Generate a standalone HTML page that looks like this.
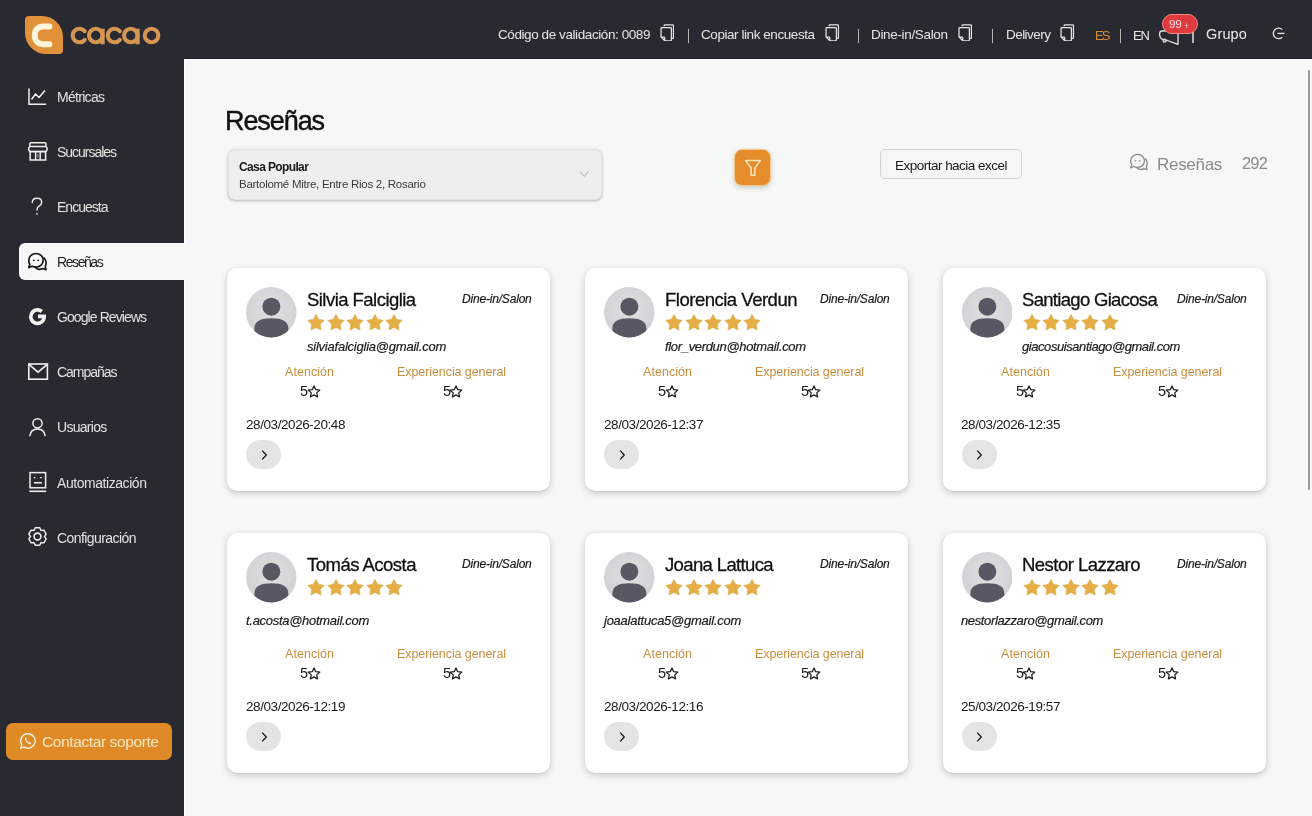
<!DOCTYPE html>
<html><head><meta charset="utf-8"><title>Reseñas</title>
<style>
html,body{margin:0;padding:0;width:1312px;height:816px;overflow:hidden;background:#f3f4f4}
body{position:relative;font-family:"Liberation Sans",sans-serif}
.t{position:absolute;white-space:nowrap;will-change:transform}
.b{position:absolute;display:block}
</style></head><body>
<div class="b" style="left:0px;top:0px;width:1312px;height:59px;background:#292931"></div>
<div class="b" style="left:0px;top:59px;width:184px;height:757px;background:#292931"></div>
<div class="b" style="left:184px;top:59px;width:1128px;height:757px;background:#f6f8f8"></div>
<div class="b" style="left:184px;top:59px;width:1128px;height:1px;background:#ffffff"></div>
<div class="b" style="left:184px;top:59px;width:1px;height:757px;background:#ffffff"></div>
<div class="b" style="left:184px;top:58px;width:1128px;height:1px;background:#202027"></div>
<div class="b" style="left:25px;top:16px;width:38px;height:38px;background:#e0913a;border-radius:4px 21px 4px 21px"></div>
<svg class="b" style="left:25px;top:16px;" width="38" height="38" viewBox="0 0 38 38"><path d="M24.4 10.5 H18.2 C12.6 10.5 9.7 14.4 9.7 19.35 C9.7 24.3 12.6 28.2 18.2 28.2 H24.4" fill="none" stroke="#fff6dc" stroke-width="5.9" stroke-linecap="round"/></svg>
<svg class="b" style="left:0px;top:0px;" width="170" height="59" viewBox="0 0 170 59"><path d="M84.71 31.13 A6.8 6.8 0 1 0 84.71 39.87" fill="none" stroke="#d59652" stroke-width="4.1" stroke-linecap="round"/><circle cx="95.8" cy="35.5" r="6.8" fill="none" stroke="#d59652" stroke-width="4.1"/><path d="M102.60 28.70 V44.35" stroke="#d59652" stroke-width="4.1"/><path d="M119.81 31.13 A6.8 6.8 0 1 0 119.81 39.87" fill="none" stroke="#d59652" stroke-width="4.1" stroke-linecap="round"/><circle cx="130.8" cy="35.5" r="6.8" fill="none" stroke="#d59652" stroke-width="4.1"/><path d="M137.60 28.70 V44.35" stroke="#d59652" stroke-width="4.1"/><circle cx="151.6" cy="35.5" r="6.8" fill="none" stroke="#d59652" stroke-width="4.1"/></svg>
<div class="t" style="left:498.00px;top:28.37px;font-size:13.5px;line-height:13.5px;color:#e6e6e6;font-weight:400;font-style:normal;letter-spacing:-0.418px;">Código de validación: 0089</div>
<svg class="b" style="left:659.7px;top:23.7px;" width="14.5" height="17.6" viewBox="0 0 14 17"><path d="M4 2.2 V1.6 Q4 0.8 4.8 0.8 H12.2 Q13 0.8 13 1.6 V13.2 Q13 14 12.2 14 H11.3" fill="none" stroke="#e6e6e6" stroke-width="1.2"/><path d="M1.8 3.4 H10.2 Q11 3.4 11 4.2 V15.4 Q11 16.2 10.2 16.2 H4.6 L1 12.6 V4.2 Q1 3.4 1.8 3.4 Z M1 12.6 H3.8 Q4.6 12.6 4.6 13.4 V16.2" fill="none" stroke="#e6e6e6" stroke-width="1.2"/></svg>
<div class="b" style="left:687.8px;top:29px;width:1.4px;height:13.5px;background:#b4b4b4"></div>
<div class="t" style="left:701.00px;top:28.37px;font-size:13.5px;line-height:13.5px;color:#e6e6e6;font-weight:400;font-style:normal;letter-spacing:-0.436px;">Copiar link encuesta</div>
<svg class="b" style="left:825.2px;top:23.7px;" width="14.5" height="17.6" viewBox="0 0 14 17"><path d="M4 2.2 V1.6 Q4 0.8 4.8 0.8 H12.2 Q13 0.8 13 1.6 V13.2 Q13 14 12.2 14 H11.3" fill="none" stroke="#e6e6e6" stroke-width="1.2"/><path d="M1.8 3.4 H10.2 Q11 3.4 11 4.2 V15.4 Q11 16.2 10.2 16.2 H4.6 L1 12.6 V4.2 Q1 3.4 1.8 3.4 Z M1 12.6 H3.8 Q4.6 12.6 4.6 13.4 V16.2" fill="none" stroke="#e6e6e6" stroke-width="1.2"/></svg>
<div class="b" style="left:857.8px;top:29px;width:1.4px;height:13.5px;background:#b4b4b4"></div>
<div class="t" style="left:870.60px;top:28.37px;font-size:13.5px;line-height:13.5px;color:#e6e6e6;font-weight:400;font-style:normal;letter-spacing:-0.335px;">Dine-in/Salon</div>
<svg class="b" style="left:957.9000000000001px;top:23.7px;" width="14.5" height="17.6" viewBox="0 0 14 17"><path d="M4 2.2 V1.6 Q4 0.8 4.8 0.8 H12.2 Q13 0.8 13 1.6 V13.2 Q13 14 12.2 14 H11.3" fill="none" stroke="#e6e6e6" stroke-width="1.2"/><path d="M1.8 3.4 H10.2 Q11 3.4 11 4.2 V15.4 Q11 16.2 10.2 16.2 H4.6 L1 12.6 V4.2 Q1 3.4 1.8 3.4 Z M1 12.6 H3.8 Q4.6 12.6 4.6 13.4 V16.2" fill="none" stroke="#e6e6e6" stroke-width="1.2"/></svg>
<div class="b" style="left:992.0px;top:29px;width:1.4px;height:13.5px;background:#b4b4b4"></div>
<div class="t" style="left:1005.60px;top:28.37px;font-size:13.5px;line-height:13.5px;color:#e6e6e6;font-weight:400;font-style:normal;letter-spacing:-0.545px;">Delivery</div>
<svg class="b" style="left:1060.2px;top:23.7px;" width="14.5" height="17.6" viewBox="0 0 14 17"><path d="M4 2.2 V1.6 Q4 0.8 4.8 0.8 H12.2 Q13 0.8 13 1.6 V13.2 Q13 14 12.2 14 H11.3" fill="none" stroke="#e6e6e6" stroke-width="1.2"/><path d="M1.8 3.4 H10.2 Q11 3.4 11 4.2 V15.4 Q11 16.2 10.2 16.2 H4.6 L1 12.6 V4.2 Q1 3.4 1.8 3.4 Z M1 12.6 H3.8 Q4.6 12.6 4.6 13.4 V16.2" fill="none" stroke="#e6e6e6" stroke-width="1.2"/></svg>
<div class="t" style="left:1094.60px;top:28.80px;font-size:13px;line-height:13px;color:#d98a3c;font-weight:400;font-style:normal;letter-spacing:-1.921px;">ES</div>
<div class="b" style="left:1120.0px;top:29px;width:1.4px;height:13.5px;background:#b4b4b4"></div>
<div class="t" style="left:1133.30px;top:28.80px;font-size:13px;line-height:13px;color:#e6e6e6;font-weight:400;font-style:normal;letter-spacing:-1.280px;">EN</div>
<svg class="b" style="left:1157px;top:26px;" width="24" height="20" viewBox="0 0 24 20"><path d="M21 4 V18.3 L9 14 M21 4.5 L4.8 5 Q2.3 5.3 2.6 9 Q3 12.6 6.2 13.6 L9 14" fill="none" stroke="#e6e6e6" stroke-width="1.3" stroke-linejoin="round"/><circle cx="7.6" cy="14.6" r="1.6" fill="none" stroke="#e6e6e6" stroke-width="1.2"/></svg>
<div class="b" style="left:1192.3px;top:29px;width:1.4px;height:13.5px;background:#b4b4b4"></div>
<div class="b" style="left:1162px;top:14px;width:35.8px;height:20px;background:#e03a3e;border-radius:10px;border:1px solid #ee8a8a;box-sizing:border-box"></div>
<div class="t" style="left:1169.40px;top:19.21px;font-size:11.8px;line-height:11.8px;color:#ffe0e0;font-weight:400;font-style:normal;letter-spacing:-0.363px;">99</div>
<div class="t" style="left:1183.60px;top:22.00px;font-size:8.5px;line-height:8.5px;color:#ffd0d0;font-weight:400;font-style:normal;letter-spacing:0.000px;">+</div>
<div class="t" style="left:1206.00px;top:26.93px;font-size:14.5px;line-height:14.5px;color:#ececec;font-weight:400;font-style:normal;letter-spacing:0.140px;">Grupo</div>
<svg class="b" style="left:1271px;top:27px;" width="15" height="13" viewBox="0 0 15 13"><path d="M11.3 2.6 A5.3 5.3 0 1 0 11.3 10.2" fill="none" stroke="#e6e6e6" stroke-width="1.3"/><path d="M6.5 6.4 H13.5" stroke="#e6e6e6" stroke-width="1.3"/></svg>
<div class="t" style="left:57.30px;top:89.85px;font-size:14px;line-height:14px;color:#e2e2e2;font-weight:400;font-style:normal;letter-spacing:-0.700px;">Métricas</div>
<div class="t" style="left:57.30px;top:144.95px;font-size:14px;line-height:14px;color:#e2e2e2;font-weight:400;font-style:normal;letter-spacing:-1.026px;">Sucursales</div>
<div class="t" style="left:57.30px;top:200.05px;font-size:14px;line-height:14px;color:#e2e2e2;font-weight:400;font-style:normal;letter-spacing:-0.984px;">Encuesta</div>
<div class="b" style="left:18.5px;top:242.5px;width:166.5px;height:37px;background:#f6f8f8;border-radius:6px 0 0 6px"></div>
<div class="t" style="left:57.30px;top:254.95px;font-size:14px;line-height:14px;color:#1e1e1e;font-weight:400;font-style:normal;letter-spacing:-1.422px;">Reseñas</div>
<div class="t" style="left:57.30px;top:310.25px;font-size:14px;line-height:14px;color:#e2e2e2;font-weight:400;font-style:normal;letter-spacing:-0.910px;">Google Reviews</div>
<div class="t" style="left:57.30px;top:365.35px;font-size:14px;line-height:14px;color:#e2e2e2;font-weight:400;font-style:normal;letter-spacing:-1.026px;">Campañas</div>
<div class="t" style="left:57.30px;top:420.45px;font-size:14px;line-height:14px;color:#e2e2e2;font-weight:400;font-style:normal;letter-spacing:-0.718px;">Usuarios</div>
<div class="t" style="left:57.30px;top:475.55px;font-size:14px;line-height:14px;color:#e2e2e2;font-weight:400;font-style:normal;letter-spacing:-0.444px;">Automatización</div>
<div class="t" style="left:57.30px;top:530.65px;font-size:14px;line-height:14px;color:#e2e2e2;font-weight:400;font-style:normal;letter-spacing:-0.576px;">Configuración</div>
<svg class="b" style="left:27px;top:87px;" width="21" height="19" viewBox="0 0 21 19"><path d="M2 1.5 V17.2 H19.2" fill="none" stroke="#f0f0f0" stroke-width="1.5"/><path d="M4.5 12.5 L8.5 7 L12 10.5 L18 3.5" fill="none" stroke="#f0f0f0" stroke-width="1.5" stroke-linejoin="round"/></svg>
<svg class="b" style="left:27px;top:141px;" width="21" height="21" viewBox="0 0 21 21"><rect x="2.8" y="1.8" width="16.2" height="3.8" rx="1" fill="none" stroke="#f0f0f0" stroke-width="1.5"/><path d="M2.8 5.6 C1.3 6.8 1.3 9.4 2.8 10.6 H19 C20.5 9.4 20.5 6.8 19 5.6" fill="none" stroke="#f0f0f0" stroke-width="1.5"/><rect x="3.2" y="10.6" width="15.4" height="8.4" fill="none" stroke="#f0f0f0" stroke-width="1.5"/><path d="M8.6 10.6 V19 M13.2 10.6 V19" stroke="#f0f0f0" stroke-width="1.4"/><path d="M10.9 12.8 V16.8" stroke="#f0f0f0" stroke-width="1" opacity="0.6"/></svg>
<svg class="b" style="left:27px;top:196px;" width="21" height="21" viewBox="0 0 21 21"><path d="M5.3 6.6 Q5.3 2.3 10 2.3 Q14.7 2.3 14.7 6.3 Q14.7 8.8 12 10.2 Q10 11.3 10 14" fill="none" stroke="#f0f0f0" stroke-width="1.4" stroke-linecap="round"/><circle cx="10" cy="17.8" r="0.9" fill="#f0f0f0"/></svg>
<svg class="b" style="left:26.6px;top:251.5px;" width="21" height="20" viewBox="0 0 21 20"><path d="M9 1.5 A7.2 6.8 0 1 1 9 15.1 Q6.8 15.1 5 14.2 L1.8 15.6 L2.8 12.4 Q1.8 10.6 1.8 8.3 A7.2 6.8 0 0 1 9 1.5 Z" fill="none" stroke="#1a1a1a" stroke-width="1.7" stroke-linejoin="round"/><path d="M16.6 5.5 Q19.2 7.5 19.2 10.8 Q19.2 12.8 18.2 14.3 L19 17.6 L15.8 16.5 Q13.8 17.6 11.5 17.3 Q9.5 17 8.2 15.3" fill="none" stroke="#1a1a1a" stroke-width="1.7" stroke-linejoin="round"/><path d="M5.9 8.3 H7.7 M10.3 8.3 H12.1" stroke="#1a1a1a" stroke-width="1.3"/></svg>
<svg class="b" style="left:27px;top:307px;" width="21" height="19" viewBox="0 0 21 19"><path d="M14.8 4.5 A6.7 6.7 0 1 0 17.2 9.4 H11" fill="none" stroke="#f0f0f0" stroke-width="3.6"/></svg>
<svg class="b" style="left:27px;top:362px;" width="22" height="19" viewBox="0 0 22 19"><rect x="1.8" y="2" width="18.6" height="15.2" fill="none" stroke="#f0f0f0" stroke-width="1.6"/><path d="M2.2 2.6 L11.1 10.2 L20 2.6" fill="none" stroke="#f0f0f0" stroke-width="1.6"/></svg>
<svg class="b" style="left:27px;top:417px;" width="21" height="21" viewBox="0 0 21 21"><circle cx="10.5" cy="6.3" r="4.6" fill="none" stroke="#f0f0f0" stroke-width="1.5"/><path d="M2.9 18.6 Q3.9 11.9 10.5 11.9 Q17.1 11.9 18.1 18.6" fill="none" stroke="#f0f0f0" stroke-width="1.5" stroke-linecap="round"/></svg>
<svg class="b" style="left:27px;top:470px;" width="21" height="24" viewBox="0 0 21 24"><rect x="3" y="2.6" width="15.6" height="15.2" fill="none" stroke="#f0f0f0" stroke-width="1.5"/><path d="M6.8 7.6 H8.4 M13.2 7.6 H14.8 M7 12.8 H15" stroke="#f0f0f0" stroke-width="1.4"/><path d="M2.3 21.3 H19.2" stroke="#f0f0f0" stroke-width="1.6"/></svg>
<svg class="b" style="left:27px;top:526px;" width="21" height="21" viewBox="0 0 21 21"><path d="M7.02 4.43 L8.19 1.80 L12.81 1.80 L13.98 4.43 L14.02 4.45 L16.88 4.15 L19.19 8.15 L17.50 10.47 L17.50 10.53 L19.19 12.85 L16.88 16.85 L14.02 16.55 L13.98 16.57 L12.81 19.20 L8.19 19.20 L7.02 16.57 L6.98 16.55 L4.12 16.85 L1.81 12.85 L3.50 10.53 L3.50 10.47 L1.81 8.15 L4.12 4.15 L6.98 4.45 Z" fill="none" stroke="#f0f0f0" stroke-width="1.4" stroke-linejoin="round"/><circle cx="10.5" cy="10.5" r="3.4" fill="none" stroke="#f0f0f0" stroke-width="1.6"/></svg>
<div class="b" style="left:6.3px;top:722.5px;width:166.2px;height:37px;background:#e08a27;border-radius:7px"></div>
<svg class="b" style="left:18.5px;top:732px;" width="18" height="18" viewBox="0 0 18 18"><path d="M9 1.8 A7.2 7.2 0 1 1 5.3 15.2 L1.8 16.2 L2.8 12.8 A7.2 7.2 0 0 1 9 1.8 Z" fill="none" stroke="#fff3e3" stroke-width="1.4" stroke-linejoin="round"/><path d="M6.3 5.6 Q5.6 6.2 5.9 7.6 Q6.8 10.3 9.8 11.9 Q11.2 12.5 11.9 11.8 L12.2 11 L10.7 10.1 L10 10.7 Q8.3 9.9 7.3 8 L7.9 7.3 L7.1 5.6 Z" fill="#fff3e3"/></svg>
<div class="t" style="left:41.70px;top:734.38px;font-size:15.5px;line-height:15.5px;color:#fde7bf;font-weight:400;font-style:normal;letter-spacing:-0.389px;">Contactar soporte</div>
<div class="t" style="left:224.60px;top:107.74px;font-size:27px;line-height:27px;color:#111111;font-weight:400;font-style:normal;letter-spacing:-1.081px;-webkit-text-stroke:0.45px #111">Reseñas</div>
<div class="b" style="left:228px;top:149px;width:374px;height:51px;background:#eeeeee;border-radius:7px;box-shadow:0 1px 3px rgba(0,0,0,0.28), inset 0 0 0 0.5px rgba(0,0,0,0.08)"></div>
<div class="t" style="left:238.80px;top:160.64px;font-size:12px;line-height:12px;color:#1a1a1a;font-weight:700;font-style:normal;letter-spacing:-0.625px;">Casa Popular</div>
<div class="t" style="left:238.80px;top:178.97px;font-size:11.5px;line-height:11.5px;color:#3a3a3a;font-weight:400;font-style:normal;letter-spacing:-0.272px;">Bartolomé Mitre, Entre Rios 2, Rosario</div>
<svg class="b" style="left:578px;top:170px;" width="12" height="8" viewBox="0 0 12 8"><path d="M2.2 1.4 L6.3 6.4 L10.4 1.4" fill="none" stroke="#a3a3a3" stroke-width="0.9"/></svg>
<div class="b" style="left:734px;top:149px;width:37px;height:37px;background:#e58d2d;border-radius:8px;border:1px solid #f6c88e;box-sizing:border-box;box-shadow:0 2px 5px rgba(0,0,0,0.18)"></div>
<svg class="b" style="left:742.5px;top:156.7px;" width="20" height="20" viewBox="0 0 20 20"><path d="M2.6 3.6 H17.4 L11.9 11 V18.3 H8.1 V11 Z" fill="none" stroke="#ffe6b8" stroke-width="1.5" stroke-linejoin="round"/></svg>
<div class="b" style="left:880px;top:149px;width:142px;height:30px;background:#f5f6f6;border:1px solid #cfd0d0;border-radius:5px;box-sizing:border-box"></div>
<div class="t" style="left:895.00px;top:158.57px;font-size:13.5px;line-height:13.5px;color:#1a1a1a;font-weight:400;font-style:normal;letter-spacing:-0.516px;">Exportar hacia excel</div>
<svg class="b" style="left:1128px;top:153px;" width="22" height="19" viewBox="0 0 21 20"><path d="M9 1.5 A7.2 6.8 0 1 1 9 15.1 Q6.8 15.1 5 14.2 L1.8 15.6 L2.8 12.4 Q1.8 10.6 1.8 8.3 A7.2 6.8 0 0 1 9 1.5 Z" fill="none" stroke="#8a8a8a" stroke-width="1.4" stroke-linejoin="round"/><path d="M16.6 5.5 Q19.2 7.5 19.2 10.8 Q19.2 12.8 18.2 14.3 L19 17.6 L15.8 16.5 Q13.8 17.6 11.5 17.3 Q9.5 17 8.2 15.3" fill="none" stroke="#8a8a8a" stroke-width="1.4" stroke-linejoin="round"/><path d="M5.9 8.3 H7.7 M10.3 8.3 H12.1" stroke="#8a8a8a" stroke-width="1.3"/></svg>
<div class="t" style="left:1157.00px;top:155.81px;font-size:17px;line-height:17px;color:#8a8a8a;font-weight:400;font-style:normal;letter-spacing:-0.300px;">Reseñas</div>
<div class="t" style="left:1242.00px;top:155.03px;font-size:16.5px;line-height:16.5px;color:#8a8a8a;font-weight:400;font-style:normal;letter-spacing:-0.844px;">292</div>
<div class="b" style="left:1308px;top:70px;width:2.2px;height:420px;background:#9a9a9a;border-radius:1px"></div>
<div class="b" style="left:227px;top:268px;width:323px;height:223px;background:#ffffff;border-radius:10px;box-shadow:0 0.5px 0.5px rgba(0,0,0,0.10), 0 2px 7px rgba(0,0,0,0.2)"></div>
<svg class="b" style="left:246.0px;top:287.0px;" width="50.5" height="50.5" viewBox="0 0 50 50"><defs><radialGradient id="g0" cx="50%" cy="45%" r="55%"><stop offset="0" stop-color="#e0e0e2"/><stop offset="1" stop-color="#d2d2d5"/></radialGradient><clipPath id="c0"><circle cx="25" cy="25" r="25"/></clipPath></defs><circle cx="25" cy="25" r="25" fill="url(#g0)"/><g clip-path="url(#c0)"><circle cx="25.1" cy="19.5" r="8.9" fill="#585864"/><path d="M8.3 52 V41 C8.3 34 14.5 31 25.1 31 C35.7 31 41.9 34 41.9 41 V52 Z" fill="#585864"/></g></svg>
<div class="t" style="left:306.50px;top:290.84px;font-size:18.5px;line-height:18.5px;color:#111111;font-weight:400;font-style:normal;letter-spacing:-0.538px;-webkit-text-stroke:0.3px #111">Silvia Falciglia</div>
<div class="t" style="left:461.60px;top:292.54px;font-size:12px;line-height:12px;color:#1a1a1a;font-weight:400;font-style:italic;letter-spacing:-0.188px;-webkit-text-stroke:0.2px #1a1a1a">Dine-in/Salon</div>
<svg class="b" style="left:306.3px;top:312.9px;" width="20" height="20" viewBox="0 0 20 20"><path d="M10.00 1.40 L12.63 6.38 L18.18 7.34 L14.25 11.38 L15.05 16.96 L10.00 14.47 L4.95 16.96 L5.75 11.38 L1.82 7.34 L7.37 6.38 Z" fill="#e6af45" stroke="#d9a441" stroke-width="0.6" stroke-linejoin="round"/></svg>
<svg class="b" style="left:325.7px;top:312.9px;" width="20" height="20" viewBox="0 0 20 20"><path d="M10.00 1.40 L12.63 6.38 L18.18 7.34 L14.25 11.38 L15.05 16.96 L10.00 14.47 L4.95 16.96 L5.75 11.38 L1.82 7.34 L7.37 6.38 Z" fill="#e6af45" stroke="#d9a441" stroke-width="0.6" stroke-linejoin="round"/></svg>
<svg class="b" style="left:345.1px;top:312.9px;" width="20" height="20" viewBox="0 0 20 20"><path d="M10.00 1.40 L12.63 6.38 L18.18 7.34 L14.25 11.38 L15.05 16.96 L10.00 14.47 L4.95 16.96 L5.75 11.38 L1.82 7.34 L7.37 6.38 Z" fill="#e6af45" stroke="#d9a441" stroke-width="0.6" stroke-linejoin="round"/></svg>
<svg class="b" style="left:364.5px;top:312.9px;" width="20" height="20" viewBox="0 0 20 20"><path d="M10.00 1.40 L12.63 6.38 L18.18 7.34 L14.25 11.38 L15.05 16.96 L10.00 14.47 L4.95 16.96 L5.75 11.38 L1.82 7.34 L7.37 6.38 Z" fill="#e6af45" stroke="#d9a441" stroke-width="0.6" stroke-linejoin="round"/></svg>
<svg class="b" style="left:383.9px;top:312.9px;" width="20" height="20" viewBox="0 0 20 20"><path d="M10.00 1.40 L12.63 6.38 L18.18 7.34 L14.25 11.38 L15.05 16.96 L10.00 14.47 L4.95 16.96 L5.75 11.38 L1.82 7.34 L7.37 6.38 Z" fill="#e6af45" stroke="#d9a441" stroke-width="0.6" stroke-linejoin="round"/></svg>
<div class="t" style="left:306.50px;top:340.20px;font-size:13px;line-height:13px;color:#1a1a1a;font-weight:400;font-style:italic;letter-spacing:-0.227px;-webkit-text-stroke:0.2px #1a1a1a">silviafalciglia@gmail.com</div>
<div class="t" style="left:285.00px;top:365.82px;font-size:12.5px;line-height:12.5px;color:#c88e3e;font-weight:400;font-style:normal;letter-spacing:0.044px;">Atención</div>
<div class="t" style="left:397.40px;top:365.82px;font-size:12.5px;line-height:12.5px;color:#c88e3e;font-weight:400;font-style:normal;letter-spacing:-0.078px;">Experiencia general</div>
<div class="t" style="left:300.30px;top:384.43px;font-size:14.5px;line-height:14.5px;color:#1a1a1a;font-weight:400;font-style:normal;letter-spacing:-2.264px;">5</div>
<svg class="b" style="left:305.7px;top:383.7px;" width="16" height="16" viewBox="0 0 16 16"><path d="M8.00 1.90 L9.69 5.68 L13.80 6.11 L10.73 8.89 L11.59 12.94 L8.00 10.87 L4.41 12.94 L5.27 8.89 L2.20 6.11 L6.31 5.68 Z" fill="none" stroke="#1a1a1a" stroke-width="1.25" stroke-linejoin="round"/></svg>
<div class="t" style="left:442.70px;top:384.43px;font-size:14.5px;line-height:14.5px;color:#1a1a1a;font-weight:400;font-style:normal;letter-spacing:-2.264px;">5</div>
<svg class="b" style="left:448.09999999999997px;top:383.7px;" width="16" height="16" viewBox="0 0 16 16"><path d="M8.00 1.90 L9.69 5.68 L13.80 6.11 L10.73 8.89 L11.59 12.94 L8.00 10.87 L4.41 12.94 L5.27 8.89 L2.20 6.11 L6.31 5.68 Z" fill="none" stroke="#1a1a1a" stroke-width="1.25" stroke-linejoin="round"/></svg>
<div class="t" style="left:245.80px;top:418.27px;font-size:13.5px;line-height:13.5px;color:#1a1a1a;font-weight:400;font-style:normal;letter-spacing:-0.428px;">28/03/2026-20:48</div>
<div class="b" style="left:246.0px;top:440.0px;width:35px;height:29px;background:#e4e4e5;border-radius:14.5px"></div>
<svg class="b" style="left:258.5px;top:449.5px;" width="10" height="10" viewBox="0 0 10 10"><path d="M3.2 0.6 L7.3 5 L3.2 9.4" fill="none" stroke="#111" stroke-width="1.25"/></svg>
<div class="b" style="left:585px;top:268px;width:323px;height:223px;background:#ffffff;border-radius:10px;box-shadow:0 0.5px 0.5px rgba(0,0,0,0.10), 0 2px 7px rgba(0,0,0,0.2)"></div>
<svg class="b" style="left:604.0px;top:287.0px;" width="50.5" height="50.5" viewBox="0 0 50 50"><defs><radialGradient id="g1" cx="50%" cy="45%" r="55%"><stop offset="0" stop-color="#e0e0e2"/><stop offset="1" stop-color="#d2d2d5"/></radialGradient><clipPath id="c1"><circle cx="25" cy="25" r="25"/></clipPath></defs><circle cx="25" cy="25" r="25" fill="url(#g1)"/><g clip-path="url(#c1)"><circle cx="25.1" cy="19.5" r="8.9" fill="#585864"/><path d="M8.3 52 V41 C8.3 34 14.5 31 25.1 31 C35.7 31 41.9 34 41.9 41 V52 Z" fill="#585864"/></g></svg>
<div class="t" style="left:664.50px;top:290.84px;font-size:18.5px;line-height:18.5px;color:#111111;font-weight:400;font-style:normal;letter-spacing:-0.492px;-webkit-text-stroke:0.3px #111">Florencia Verdun</div>
<div class="t" style="left:819.60px;top:292.54px;font-size:12px;line-height:12px;color:#1a1a1a;font-weight:400;font-style:italic;letter-spacing:-0.188px;-webkit-text-stroke:0.2px #1a1a1a">Dine-in/Salon</div>
<svg class="b" style="left:664.3px;top:312.9px;" width="20" height="20" viewBox="0 0 20 20"><path d="M10.00 1.40 L12.63 6.38 L18.18 7.34 L14.25 11.38 L15.05 16.96 L10.00 14.47 L4.95 16.96 L5.75 11.38 L1.82 7.34 L7.37 6.38 Z" fill="#e6af45" stroke="#d9a441" stroke-width="0.6" stroke-linejoin="round"/></svg>
<svg class="b" style="left:683.6999999999999px;top:312.9px;" width="20" height="20" viewBox="0 0 20 20"><path d="M10.00 1.40 L12.63 6.38 L18.18 7.34 L14.25 11.38 L15.05 16.96 L10.00 14.47 L4.95 16.96 L5.75 11.38 L1.82 7.34 L7.37 6.38 Z" fill="#e6af45" stroke="#d9a441" stroke-width="0.6" stroke-linejoin="round"/></svg>
<svg class="b" style="left:703.0999999999999px;top:312.9px;" width="20" height="20" viewBox="0 0 20 20"><path d="M10.00 1.40 L12.63 6.38 L18.18 7.34 L14.25 11.38 L15.05 16.96 L10.00 14.47 L4.95 16.96 L5.75 11.38 L1.82 7.34 L7.37 6.38 Z" fill="#e6af45" stroke="#d9a441" stroke-width="0.6" stroke-linejoin="round"/></svg>
<svg class="b" style="left:722.5px;top:312.9px;" width="20" height="20" viewBox="0 0 20 20"><path d="M10.00 1.40 L12.63 6.38 L18.18 7.34 L14.25 11.38 L15.05 16.96 L10.00 14.47 L4.95 16.96 L5.75 11.38 L1.82 7.34 L7.37 6.38 Z" fill="#e6af45" stroke="#d9a441" stroke-width="0.6" stroke-linejoin="round"/></svg>
<svg class="b" style="left:741.9px;top:312.9px;" width="20" height="20" viewBox="0 0 20 20"><path d="M10.00 1.40 L12.63 6.38 L18.18 7.34 L14.25 11.38 L15.05 16.96 L10.00 14.47 L4.95 16.96 L5.75 11.38 L1.82 7.34 L7.37 6.38 Z" fill="#e6af45" stroke="#d9a441" stroke-width="0.6" stroke-linejoin="round"/></svg>
<div class="t" style="left:664.50px;top:340.20px;font-size:13px;line-height:13px;color:#1a1a1a;font-weight:400;font-style:italic;letter-spacing:-0.331px;-webkit-text-stroke:0.2px #1a1a1a">flor_verdun@hotmail.com</div>
<div class="t" style="left:643.00px;top:365.82px;font-size:12.5px;line-height:12.5px;color:#c88e3e;font-weight:400;font-style:normal;letter-spacing:0.044px;">Atención</div>
<div class="t" style="left:755.40px;top:365.82px;font-size:12.5px;line-height:12.5px;color:#c88e3e;font-weight:400;font-style:normal;letter-spacing:-0.078px;">Experiencia general</div>
<div class="t" style="left:658.30px;top:384.43px;font-size:14.5px;line-height:14.5px;color:#1a1a1a;font-weight:400;font-style:normal;letter-spacing:-2.264px;">5</div>
<svg class="b" style="left:663.7px;top:383.7px;" width="16" height="16" viewBox="0 0 16 16"><path d="M8.00 1.90 L9.69 5.68 L13.80 6.11 L10.73 8.89 L11.59 12.94 L8.00 10.87 L4.41 12.94 L5.27 8.89 L2.20 6.11 L6.31 5.68 Z" fill="none" stroke="#1a1a1a" stroke-width="1.25" stroke-linejoin="round"/></svg>
<div class="t" style="left:800.70px;top:384.43px;font-size:14.5px;line-height:14.5px;color:#1a1a1a;font-weight:400;font-style:normal;letter-spacing:-2.264px;">5</div>
<svg class="b" style="left:806.1px;top:383.7px;" width="16" height="16" viewBox="0 0 16 16"><path d="M8.00 1.90 L9.69 5.68 L13.80 6.11 L10.73 8.89 L11.59 12.94 L8.00 10.87 L4.41 12.94 L5.27 8.89 L2.20 6.11 L6.31 5.68 Z" fill="none" stroke="#1a1a1a" stroke-width="1.25" stroke-linejoin="round"/></svg>
<div class="t" style="left:603.80px;top:418.27px;font-size:13.5px;line-height:13.5px;color:#1a1a1a;font-weight:400;font-style:normal;letter-spacing:-0.428px;">28/03/2026-12:37</div>
<div class="b" style="left:604.0px;top:440.0px;width:35px;height:29px;background:#e4e4e5;border-radius:14.5px"></div>
<svg class="b" style="left:616.5px;top:449.5px;" width="10" height="10" viewBox="0 0 10 10"><path d="M3.2 0.6 L7.3 5 L3.2 9.4" fill="none" stroke="#111" stroke-width="1.25"/></svg>
<div class="b" style="left:943px;top:268px;width:323px;height:223px;background:#ffffff;border-radius:10px;box-shadow:0 0.5px 0.5px rgba(0,0,0,0.10), 0 2px 7px rgba(0,0,0,0.2)"></div>
<svg class="b" style="left:961.6px;top:287.0px;" width="50.5" height="50.5" viewBox="0 0 50 50"><defs><radialGradient id="g2" cx="50%" cy="45%" r="55%"><stop offset="0" stop-color="#e0e0e2"/><stop offset="1" stop-color="#d2d2d5"/></radialGradient><clipPath id="c2"><circle cx="25" cy="25" r="25"/></clipPath></defs><circle cx="25" cy="25" r="25" fill="url(#g2)"/><g clip-path="url(#c2)"><circle cx="25.1" cy="19.5" r="8.9" fill="#585864"/><path d="M8.3 52 V41 C8.3 34 14.5 31 25.1 31 C35.7 31 41.9 34 41.9 41 V52 Z" fill="#585864"/></g></svg>
<div class="t" style="left:1022.10px;top:290.84px;font-size:18.5px;line-height:18.5px;color:#111111;font-weight:400;font-style:normal;letter-spacing:-0.690px;-webkit-text-stroke:0.3px #111">Santiago Giacosa</div>
<div class="t" style="left:1177.20px;top:292.54px;font-size:12px;line-height:12px;color:#1a1a1a;font-weight:400;font-style:italic;letter-spacing:-0.188px;-webkit-text-stroke:0.2px #1a1a1a">Dine-in/Salon</div>
<svg class="b" style="left:1021.9000000000001px;top:312.9px;" width="20" height="20" viewBox="0 0 20 20"><path d="M10.00 1.40 L12.63 6.38 L18.18 7.34 L14.25 11.38 L15.05 16.96 L10.00 14.47 L4.95 16.96 L5.75 11.38 L1.82 7.34 L7.37 6.38 Z" fill="#e6af45" stroke="#d9a441" stroke-width="0.6" stroke-linejoin="round"/></svg>
<svg class="b" style="left:1041.3000000000002px;top:312.9px;" width="20" height="20" viewBox="0 0 20 20"><path d="M10.00 1.40 L12.63 6.38 L18.18 7.34 L14.25 11.38 L15.05 16.96 L10.00 14.47 L4.95 16.96 L5.75 11.38 L1.82 7.34 L7.37 6.38 Z" fill="#e6af45" stroke="#d9a441" stroke-width="0.6" stroke-linejoin="round"/></svg>
<svg class="b" style="left:1060.7px;top:312.9px;" width="20" height="20" viewBox="0 0 20 20"><path d="M10.00 1.40 L12.63 6.38 L18.18 7.34 L14.25 11.38 L15.05 16.96 L10.00 14.47 L4.95 16.96 L5.75 11.38 L1.82 7.34 L7.37 6.38 Z" fill="#e6af45" stroke="#d9a441" stroke-width="0.6" stroke-linejoin="round"/></svg>
<svg class="b" style="left:1080.1000000000001px;top:312.9px;" width="20" height="20" viewBox="0 0 20 20"><path d="M10.00 1.40 L12.63 6.38 L18.18 7.34 L14.25 11.38 L15.05 16.96 L10.00 14.47 L4.95 16.96 L5.75 11.38 L1.82 7.34 L7.37 6.38 Z" fill="#e6af45" stroke="#d9a441" stroke-width="0.6" stroke-linejoin="round"/></svg>
<svg class="b" style="left:1099.5px;top:312.9px;" width="20" height="20" viewBox="0 0 20 20"><path d="M10.00 1.40 L12.63 6.38 L18.18 7.34 L14.25 11.38 L15.05 16.96 L10.00 14.47 L4.95 16.96 L5.75 11.38 L1.82 7.34 L7.37 6.38 Z" fill="#e6af45" stroke="#d9a441" stroke-width="0.6" stroke-linejoin="round"/></svg>
<div class="t" style="left:1022.10px;top:340.20px;font-size:13px;line-height:13px;color:#1a1a1a;font-weight:400;font-style:italic;letter-spacing:-0.434px;-webkit-text-stroke:0.2px #1a1a1a">giacosuisantiago@gmail.com</div>
<div class="t" style="left:1000.60px;top:365.82px;font-size:12.5px;line-height:12.5px;color:#c88e3e;font-weight:400;font-style:normal;letter-spacing:0.044px;">Atención</div>
<div class="t" style="left:1113.00px;top:365.82px;font-size:12.5px;line-height:12.5px;color:#c88e3e;font-weight:400;font-style:normal;letter-spacing:-0.078px;">Experiencia general</div>
<div class="t" style="left:1015.90px;top:384.43px;font-size:14.5px;line-height:14.5px;color:#1a1a1a;font-weight:400;font-style:normal;letter-spacing:-2.264px;">5</div>
<svg class="b" style="left:1021.3px;top:383.7px;" width="16" height="16" viewBox="0 0 16 16"><path d="M8.00 1.90 L9.69 5.68 L13.80 6.11 L10.73 8.89 L11.59 12.94 L8.00 10.87 L4.41 12.94 L5.27 8.89 L2.20 6.11 L6.31 5.68 Z" fill="none" stroke="#1a1a1a" stroke-width="1.25" stroke-linejoin="round"/></svg>
<div class="t" style="left:1158.30px;top:384.43px;font-size:14.5px;line-height:14.5px;color:#1a1a1a;font-weight:400;font-style:normal;letter-spacing:-2.264px;">5</div>
<svg class="b" style="left:1163.7px;top:383.7px;" width="16" height="16" viewBox="0 0 16 16"><path d="M8.00 1.90 L9.69 5.68 L13.80 6.11 L10.73 8.89 L11.59 12.94 L8.00 10.87 L4.41 12.94 L5.27 8.89 L2.20 6.11 L6.31 5.68 Z" fill="none" stroke="#1a1a1a" stroke-width="1.25" stroke-linejoin="round"/></svg>
<div class="t" style="left:961.40px;top:418.27px;font-size:13.5px;line-height:13.5px;color:#1a1a1a;font-weight:400;font-style:normal;letter-spacing:-0.428px;">28/03/2026-12:35</div>
<div class="b" style="left:961.6px;top:440.0px;width:35px;height:29px;background:#e4e4e5;border-radius:14.5px"></div>
<svg class="b" style="left:974.1px;top:449.5px;" width="10" height="10" viewBox="0 0 10 10"><path d="M3.2 0.6 L7.3 5 L3.2 9.4" fill="none" stroke="#111" stroke-width="1.25"/></svg>
<div class="b" style="left:227px;top:533px;width:323px;height:240px;background:#ffffff;border-radius:10px;box-shadow:0 0.5px 0.5px rgba(0,0,0,0.10), 0 2px 7px rgba(0,0,0,0.2)"></div>
<svg class="b" style="left:246.0px;top:552.0px;" width="50.5" height="50.5" viewBox="0 0 50 50"><defs><radialGradient id="g3" cx="50%" cy="45%" r="55%"><stop offset="0" stop-color="#e0e0e2"/><stop offset="1" stop-color="#d2d2d5"/></radialGradient><clipPath id="c3"><circle cx="25" cy="25" r="25"/></clipPath></defs><circle cx="25" cy="25" r="25" fill="url(#g3)"/><g clip-path="url(#c3)"><circle cx="25.1" cy="19.5" r="8.9" fill="#585864"/><path d="M8.3 52 V41 C8.3 34 14.5 31 25.1 31 C35.7 31 41.9 34 41.9 41 V52 Z" fill="#585864"/></g></svg>
<div class="t" style="left:306.50px;top:555.84px;font-size:18.5px;line-height:18.5px;color:#111111;font-weight:400;font-style:normal;letter-spacing:-0.514px;-webkit-text-stroke:0.3px #111">Tomás Acosta</div>
<div class="t" style="left:461.60px;top:557.54px;font-size:12px;line-height:12px;color:#1a1a1a;font-weight:400;font-style:italic;letter-spacing:-0.188px;-webkit-text-stroke:0.2px #1a1a1a">Dine-in/Salon</div>
<svg class="b" style="left:306.3px;top:577.9px;" width="20" height="20" viewBox="0 0 20 20"><path d="M10.00 1.40 L12.63 6.38 L18.18 7.34 L14.25 11.38 L15.05 16.96 L10.00 14.47 L4.95 16.96 L5.75 11.38 L1.82 7.34 L7.37 6.38 Z" fill="#e6af45" stroke="#d9a441" stroke-width="0.6" stroke-linejoin="round"/></svg>
<svg class="b" style="left:325.7px;top:577.9px;" width="20" height="20" viewBox="0 0 20 20"><path d="M10.00 1.40 L12.63 6.38 L18.18 7.34 L14.25 11.38 L15.05 16.96 L10.00 14.47 L4.95 16.96 L5.75 11.38 L1.82 7.34 L7.37 6.38 Z" fill="#e6af45" stroke="#d9a441" stroke-width="0.6" stroke-linejoin="round"/></svg>
<svg class="b" style="left:345.1px;top:577.9px;" width="20" height="20" viewBox="0 0 20 20"><path d="M10.00 1.40 L12.63 6.38 L18.18 7.34 L14.25 11.38 L15.05 16.96 L10.00 14.47 L4.95 16.96 L5.75 11.38 L1.82 7.34 L7.37 6.38 Z" fill="#e6af45" stroke="#d9a441" stroke-width="0.6" stroke-linejoin="round"/></svg>
<svg class="b" style="left:364.5px;top:577.9px;" width="20" height="20" viewBox="0 0 20 20"><path d="M10.00 1.40 L12.63 6.38 L18.18 7.34 L14.25 11.38 L15.05 16.96 L10.00 14.47 L4.95 16.96 L5.75 11.38 L1.82 7.34 L7.37 6.38 Z" fill="#e6af45" stroke="#d9a441" stroke-width="0.6" stroke-linejoin="round"/></svg>
<svg class="b" style="left:383.9px;top:577.9px;" width="20" height="20" viewBox="0 0 20 20"><path d="M10.00 1.40 L12.63 6.38 L18.18 7.34 L14.25 11.38 L15.05 16.96 L10.00 14.47 L4.95 16.96 L5.75 11.38 L1.82 7.34 L7.37 6.38 Z" fill="#e6af45" stroke="#d9a441" stroke-width="0.6" stroke-linejoin="round"/></svg>
<div class="t" style="left:245.50px;top:614.30px;font-size:13px;line-height:13px;color:#1a1a1a;font-weight:400;font-style:italic;letter-spacing:-0.290px;-webkit-text-stroke:0.2px #1a1a1a">t.acosta@hotmail.com</div>
<div class="t" style="left:285.00px;top:647.82px;font-size:12.5px;line-height:12.5px;color:#c88e3e;font-weight:400;font-style:normal;letter-spacing:0.044px;">Atención</div>
<div class="t" style="left:397.40px;top:647.82px;font-size:12.5px;line-height:12.5px;color:#c88e3e;font-weight:400;font-style:normal;letter-spacing:-0.078px;">Experiencia general</div>
<div class="t" style="left:300.30px;top:666.43px;font-size:14.5px;line-height:14.5px;color:#1a1a1a;font-weight:400;font-style:normal;letter-spacing:-2.264px;">5</div>
<svg class="b" style="left:305.7px;top:665.7px;" width="16" height="16" viewBox="0 0 16 16"><path d="M8.00 1.90 L9.69 5.68 L13.80 6.11 L10.73 8.89 L11.59 12.94 L8.00 10.87 L4.41 12.94 L5.27 8.89 L2.20 6.11 L6.31 5.68 Z" fill="none" stroke="#1a1a1a" stroke-width="1.25" stroke-linejoin="round"/></svg>
<div class="t" style="left:442.70px;top:666.43px;font-size:14.5px;line-height:14.5px;color:#1a1a1a;font-weight:400;font-style:normal;letter-spacing:-2.264px;">5</div>
<svg class="b" style="left:448.09999999999997px;top:665.7px;" width="16" height="16" viewBox="0 0 16 16"><path d="M8.00 1.90 L9.69 5.68 L13.80 6.11 L10.73 8.89 L11.59 12.94 L8.00 10.87 L4.41 12.94 L5.27 8.89 L2.20 6.11 L6.31 5.68 Z" fill="none" stroke="#1a1a1a" stroke-width="1.25" stroke-linejoin="round"/></svg>
<div class="t" style="left:245.80px;top:700.27px;font-size:13.5px;line-height:13.5px;color:#1a1a1a;font-weight:400;font-style:normal;letter-spacing:-0.428px;">28/03/2026-12:19</div>
<div class="b" style="left:246.0px;top:722.0px;width:35px;height:29px;background:#e4e4e5;border-radius:14.5px"></div>
<svg class="b" style="left:258.5px;top:731.5px;" width="10" height="10" viewBox="0 0 10 10"><path d="M3.2 0.6 L7.3 5 L3.2 9.4" fill="none" stroke="#111" stroke-width="1.25"/></svg>
<div class="b" style="left:585px;top:533px;width:323px;height:240px;background:#ffffff;border-radius:10px;box-shadow:0 0.5px 0.5px rgba(0,0,0,0.10), 0 2px 7px rgba(0,0,0,0.2)"></div>
<svg class="b" style="left:604.0px;top:552.0px;" width="50.5" height="50.5" viewBox="0 0 50 50"><defs><radialGradient id="g4" cx="50%" cy="45%" r="55%"><stop offset="0" stop-color="#e0e0e2"/><stop offset="1" stop-color="#d2d2d5"/></radialGradient><clipPath id="c4"><circle cx="25" cy="25" r="25"/></clipPath></defs><circle cx="25" cy="25" r="25" fill="url(#g4)"/><g clip-path="url(#c4)"><circle cx="25.1" cy="19.5" r="8.9" fill="#585864"/><path d="M8.3 52 V41 C8.3 34 14.5 31 25.1 31 C35.7 31 41.9 34 41.9 41 V52 Z" fill="#585864"/></g></svg>
<div class="t" style="left:664.50px;top:555.84px;font-size:18.5px;line-height:18.5px;color:#111111;font-weight:400;font-style:normal;letter-spacing:-0.633px;-webkit-text-stroke:0.3px #111">Joana Lattuca</div>
<div class="t" style="left:819.60px;top:557.54px;font-size:12px;line-height:12px;color:#1a1a1a;font-weight:400;font-style:italic;letter-spacing:-0.188px;-webkit-text-stroke:0.2px #1a1a1a">Dine-in/Salon</div>
<svg class="b" style="left:664.3px;top:577.9px;" width="20" height="20" viewBox="0 0 20 20"><path d="M10.00 1.40 L12.63 6.38 L18.18 7.34 L14.25 11.38 L15.05 16.96 L10.00 14.47 L4.95 16.96 L5.75 11.38 L1.82 7.34 L7.37 6.38 Z" fill="#e6af45" stroke="#d9a441" stroke-width="0.6" stroke-linejoin="round"/></svg>
<svg class="b" style="left:683.6999999999999px;top:577.9px;" width="20" height="20" viewBox="0 0 20 20"><path d="M10.00 1.40 L12.63 6.38 L18.18 7.34 L14.25 11.38 L15.05 16.96 L10.00 14.47 L4.95 16.96 L5.75 11.38 L1.82 7.34 L7.37 6.38 Z" fill="#e6af45" stroke="#d9a441" stroke-width="0.6" stroke-linejoin="round"/></svg>
<svg class="b" style="left:703.0999999999999px;top:577.9px;" width="20" height="20" viewBox="0 0 20 20"><path d="M10.00 1.40 L12.63 6.38 L18.18 7.34 L14.25 11.38 L15.05 16.96 L10.00 14.47 L4.95 16.96 L5.75 11.38 L1.82 7.34 L7.37 6.38 Z" fill="#e6af45" stroke="#d9a441" stroke-width="0.6" stroke-linejoin="round"/></svg>
<svg class="b" style="left:722.5px;top:577.9px;" width="20" height="20" viewBox="0 0 20 20"><path d="M10.00 1.40 L12.63 6.38 L18.18 7.34 L14.25 11.38 L15.05 16.96 L10.00 14.47 L4.95 16.96 L5.75 11.38 L1.82 7.34 L7.37 6.38 Z" fill="#e6af45" stroke="#d9a441" stroke-width="0.6" stroke-linejoin="round"/></svg>
<svg class="b" style="left:741.9px;top:577.9px;" width="20" height="20" viewBox="0 0 20 20"><path d="M10.00 1.40 L12.63 6.38 L18.18 7.34 L14.25 11.38 L15.05 16.96 L10.00 14.47 L4.95 16.96 L5.75 11.38 L1.82 7.34 L7.37 6.38 Z" fill="#e6af45" stroke="#d9a441" stroke-width="0.6" stroke-linejoin="round"/></svg>
<div class="t" style="left:603.50px;top:614.30px;font-size:13px;line-height:13px;color:#1a1a1a;font-weight:400;font-style:italic;letter-spacing:-0.252px;-webkit-text-stroke:0.2px #1a1a1a">joaalattuca5@gmail.com</div>
<div class="t" style="left:643.00px;top:647.82px;font-size:12.5px;line-height:12.5px;color:#c88e3e;font-weight:400;font-style:normal;letter-spacing:0.044px;">Atención</div>
<div class="t" style="left:755.40px;top:647.82px;font-size:12.5px;line-height:12.5px;color:#c88e3e;font-weight:400;font-style:normal;letter-spacing:-0.078px;">Experiencia general</div>
<div class="t" style="left:658.30px;top:666.43px;font-size:14.5px;line-height:14.5px;color:#1a1a1a;font-weight:400;font-style:normal;letter-spacing:-2.264px;">5</div>
<svg class="b" style="left:663.7px;top:665.7px;" width="16" height="16" viewBox="0 0 16 16"><path d="M8.00 1.90 L9.69 5.68 L13.80 6.11 L10.73 8.89 L11.59 12.94 L8.00 10.87 L4.41 12.94 L5.27 8.89 L2.20 6.11 L6.31 5.68 Z" fill="none" stroke="#1a1a1a" stroke-width="1.25" stroke-linejoin="round"/></svg>
<div class="t" style="left:800.70px;top:666.43px;font-size:14.5px;line-height:14.5px;color:#1a1a1a;font-weight:400;font-style:normal;letter-spacing:-2.264px;">5</div>
<svg class="b" style="left:806.1px;top:665.7px;" width="16" height="16" viewBox="0 0 16 16"><path d="M8.00 1.90 L9.69 5.68 L13.80 6.11 L10.73 8.89 L11.59 12.94 L8.00 10.87 L4.41 12.94 L5.27 8.89 L2.20 6.11 L6.31 5.68 Z" fill="none" stroke="#1a1a1a" stroke-width="1.25" stroke-linejoin="round"/></svg>
<div class="t" style="left:603.80px;top:700.27px;font-size:13.5px;line-height:13.5px;color:#1a1a1a;font-weight:400;font-style:normal;letter-spacing:-0.428px;">28/03/2026-12:16</div>
<div class="b" style="left:604.0px;top:722.0px;width:35px;height:29px;background:#e4e4e5;border-radius:14.5px"></div>
<svg class="b" style="left:616.5px;top:731.5px;" width="10" height="10" viewBox="0 0 10 10"><path d="M3.2 0.6 L7.3 5 L3.2 9.4" fill="none" stroke="#111" stroke-width="1.25"/></svg>
<div class="b" style="left:943px;top:533px;width:323px;height:240px;background:#ffffff;border-radius:10px;box-shadow:0 0.5px 0.5px rgba(0,0,0,0.10), 0 2px 7px rgba(0,0,0,0.2)"></div>
<svg class="b" style="left:961.6px;top:552.0px;" width="50.5" height="50.5" viewBox="0 0 50 50"><defs><radialGradient id="g5" cx="50%" cy="45%" r="55%"><stop offset="0" stop-color="#e0e0e2"/><stop offset="1" stop-color="#d2d2d5"/></radialGradient><clipPath id="c5"><circle cx="25" cy="25" r="25"/></clipPath></defs><circle cx="25" cy="25" r="25" fill="url(#g5)"/><g clip-path="url(#c5)"><circle cx="25.1" cy="19.5" r="8.9" fill="#585864"/><path d="M8.3 52 V41 C8.3 34 14.5 31 25.1 31 C35.7 31 41.9 34 41.9 41 V52 Z" fill="#585864"/></g></svg>
<div class="t" style="left:1022.10px;top:555.84px;font-size:18.5px;line-height:18.5px;color:#111111;font-weight:400;font-style:normal;letter-spacing:-0.532px;-webkit-text-stroke:0.3px #111">Nestor Lazzaro</div>
<div class="t" style="left:1177.20px;top:557.54px;font-size:12px;line-height:12px;color:#1a1a1a;font-weight:400;font-style:italic;letter-spacing:-0.188px;-webkit-text-stroke:0.2px #1a1a1a">Dine-in/Salon</div>
<svg class="b" style="left:1021.9000000000001px;top:577.9px;" width="20" height="20" viewBox="0 0 20 20"><path d="M10.00 1.40 L12.63 6.38 L18.18 7.34 L14.25 11.38 L15.05 16.96 L10.00 14.47 L4.95 16.96 L5.75 11.38 L1.82 7.34 L7.37 6.38 Z" fill="#e6af45" stroke="#d9a441" stroke-width="0.6" stroke-linejoin="round"/></svg>
<svg class="b" style="left:1041.3000000000002px;top:577.9px;" width="20" height="20" viewBox="0 0 20 20"><path d="M10.00 1.40 L12.63 6.38 L18.18 7.34 L14.25 11.38 L15.05 16.96 L10.00 14.47 L4.95 16.96 L5.75 11.38 L1.82 7.34 L7.37 6.38 Z" fill="#e6af45" stroke="#d9a441" stroke-width="0.6" stroke-linejoin="round"/></svg>
<svg class="b" style="left:1060.7px;top:577.9px;" width="20" height="20" viewBox="0 0 20 20"><path d="M10.00 1.40 L12.63 6.38 L18.18 7.34 L14.25 11.38 L15.05 16.96 L10.00 14.47 L4.95 16.96 L5.75 11.38 L1.82 7.34 L7.37 6.38 Z" fill="#e6af45" stroke="#d9a441" stroke-width="0.6" stroke-linejoin="round"/></svg>
<svg class="b" style="left:1080.1000000000001px;top:577.9px;" width="20" height="20" viewBox="0 0 20 20"><path d="M10.00 1.40 L12.63 6.38 L18.18 7.34 L14.25 11.38 L15.05 16.96 L10.00 14.47 L4.95 16.96 L5.75 11.38 L1.82 7.34 L7.37 6.38 Z" fill="#e6af45" stroke="#d9a441" stroke-width="0.6" stroke-linejoin="round"/></svg>
<svg class="b" style="left:1099.5px;top:577.9px;" width="20" height="20" viewBox="0 0 20 20"><path d="M10.00 1.40 L12.63 6.38 L18.18 7.34 L14.25 11.38 L15.05 16.96 L10.00 14.47 L4.95 16.96 L5.75 11.38 L1.82 7.34 L7.37 6.38 Z" fill="#e6af45" stroke="#d9a441" stroke-width="0.6" stroke-linejoin="round"/></svg>
<div class="t" style="left:961.10px;top:614.30px;font-size:13px;line-height:13px;color:#1a1a1a;font-weight:400;font-style:italic;letter-spacing:-0.369px;-webkit-text-stroke:0.2px #1a1a1a">nestorlazzaro@gmail.com</div>
<div class="t" style="left:1000.60px;top:647.82px;font-size:12.5px;line-height:12.5px;color:#c88e3e;font-weight:400;font-style:normal;letter-spacing:0.044px;">Atención</div>
<div class="t" style="left:1113.00px;top:647.82px;font-size:12.5px;line-height:12.5px;color:#c88e3e;font-weight:400;font-style:normal;letter-spacing:-0.078px;">Experiencia general</div>
<div class="t" style="left:1015.90px;top:666.43px;font-size:14.5px;line-height:14.5px;color:#1a1a1a;font-weight:400;font-style:normal;letter-spacing:-2.264px;">5</div>
<svg class="b" style="left:1021.3px;top:665.7px;" width="16" height="16" viewBox="0 0 16 16"><path d="M8.00 1.90 L9.69 5.68 L13.80 6.11 L10.73 8.89 L11.59 12.94 L8.00 10.87 L4.41 12.94 L5.27 8.89 L2.20 6.11 L6.31 5.68 Z" fill="none" stroke="#1a1a1a" stroke-width="1.25" stroke-linejoin="round"/></svg>
<div class="t" style="left:1158.30px;top:666.43px;font-size:14.5px;line-height:14.5px;color:#1a1a1a;font-weight:400;font-style:normal;letter-spacing:-2.264px;">5</div>
<svg class="b" style="left:1163.7px;top:665.7px;" width="16" height="16" viewBox="0 0 16 16"><path d="M8.00 1.90 L9.69 5.68 L13.80 6.11 L10.73 8.89 L11.59 12.94 L8.00 10.87 L4.41 12.94 L5.27 8.89 L2.20 6.11 L6.31 5.68 Z" fill="none" stroke="#1a1a1a" stroke-width="1.25" stroke-linejoin="round"/></svg>
<div class="t" style="left:961.40px;top:700.27px;font-size:13.5px;line-height:13.5px;color:#1a1a1a;font-weight:400;font-style:normal;letter-spacing:-0.428px;">25/03/2026-19:57</div>
<div class="b" style="left:961.6px;top:722.0px;width:35px;height:29px;background:#e4e4e5;border-radius:14.5px"></div>
<svg class="b" style="left:974.1px;top:731.5px;" width="10" height="10" viewBox="0 0 10 10"><path d="M3.2 0.6 L7.3 5 L3.2 9.4" fill="none" stroke="#111" stroke-width="1.25"/></svg>
</body></html>
